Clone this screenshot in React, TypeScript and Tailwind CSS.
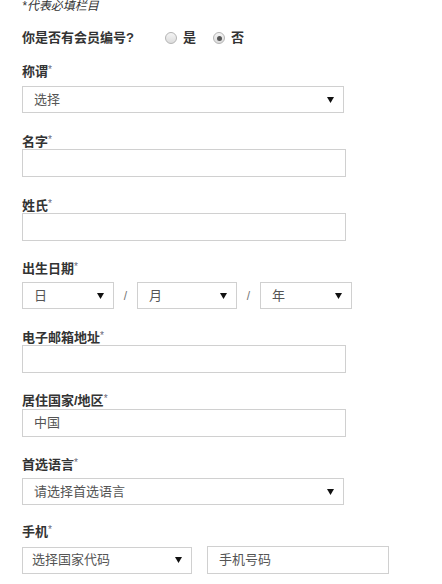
import { ReactNode } from "react";

const font = { fontFamily: '"Liberation Sans", "Noto Sans CJK SC", sans-serif' };

function Arrow() {
  return (
    <svg width="7" height="6" viewBox="0 0 7 6" className="shrink-0">
      <polygon points="0,0 7,0 3.5,6" fill="#111" />
    </svg>
  );
}

function Label({ text, className = "" }: { text: string; className?: string }) {
  return (
    <div className={`h-[14px] text-[13px] font-bold leading-[14px] text-[#333] ${className}`}>
      {text}
      <span className="align-top text-[10px] font-normal leading-[10px] text-[#667]">*</span>
    </div>
  );
}

function SelectBox({ value, className = "", pl = "pl-[11px]" }: { value: string; className?: string; pl?: string }) {
  return (
    <div
      className={`flex h-[27px] items-center justify-between border border-[#d0d0d0] bg-white ${pl} pr-[9px] text-[13px] text-[#555] ${className}`}
    >
      <span>{value}</span>
      <Arrow />
    </div>
  );
}

function TextBox({ value = "", className = "" }: { value?: string; className?: string }) {
  return (
    <div
      className={`flex h-[28px] items-center border border-[#d0d0d0] bg-white pl-[11px] text-[13px] text-[#555] ${className}`}
    >
      {value}
    </div>
  );
}

function Radio({ checked, children }: { checked?: boolean; children: ReactNode }) {
  return (
    <span className="flex items-center">
      <span className="flex h-[12px] w-[12px] items-center justify-center rounded-full border border-[#b4b4b4] bg-gradient-to-b from-[#f4f4f4] to-[#dcdcdc]">
        {checked && <span className="h-[5px] w-[5px] rounded-full bg-[#555]" />}
      </span>
      <span className="ml-[6px] text-[13px] font-bold text-[#333]">{children}</span>
    </span>
  );
}

function Slash() {
  return <span className="w-[23px] text-center text-[12px] text-[#777]">/</span>;
}

export default function App() {
  return (
    <div className="min-h-[584px] w-[442px] bg-white pl-[22px]" style={font}>
      <div className="h-[14px] text-[12px] italic leading-[12px] text-[#333]">*代表必填栏目</div>

      <div className="mt-[16px] flex h-[16px] items-center">
        <span className="w-[143px] text-[13px] font-bold text-[#333]">你是否有会员编号?</span>
        <div className="flex items-center gap-[17px]">
          <Radio>是</Radio>
          <Radio checked>否</Radio>
        </div>
      </div>

      <Label text="称谓" className="mt-[19px]" />
      <SelectBox value="选择" className="mt-[7px] w-[322px]" />

      <Label text="名字" className="mt-[22px]" />
      <TextBox className="w-[324px]" />

      <Label text="姓氏" className="mt-[22px]" />
      <TextBox className="w-[324px]" />

      <Label text="出生日期" className="mt-[21px]" />
      <div className="mt-[6px] flex items-center">
        <SelectBox value="日" className="w-[92px]" />
        <Slash />
        <SelectBox value="月" className="w-[100px]" />
        <Slash />
        <SelectBox value="年" className="w-[92px]" />
      </div>

      <Label text="电子邮箱地址" className="mt-[22px]" />
      <TextBox className="w-[324px]" />

      <Label text="居住国家/地区" className="mt-[21px]" />
      <TextBox value="中国" className="mt-px w-[324px]" />

      <Label text="首选语言" className="mt-[21px]" />
      <SelectBox value="请选择首选语言" className="mt-[6px] w-[322px]" />

      <Label text="手机" className="mt-[20px]" />
      <div className="mt-[7px] flex items-center">
        <SelectBox value="选择国家代码" pl="pl-[9px]" className="w-[170px]" />
        <TextBox value="手机号码" className="ml-[15px] w-[182px]" />
      </div>
    </div>
  );
}
